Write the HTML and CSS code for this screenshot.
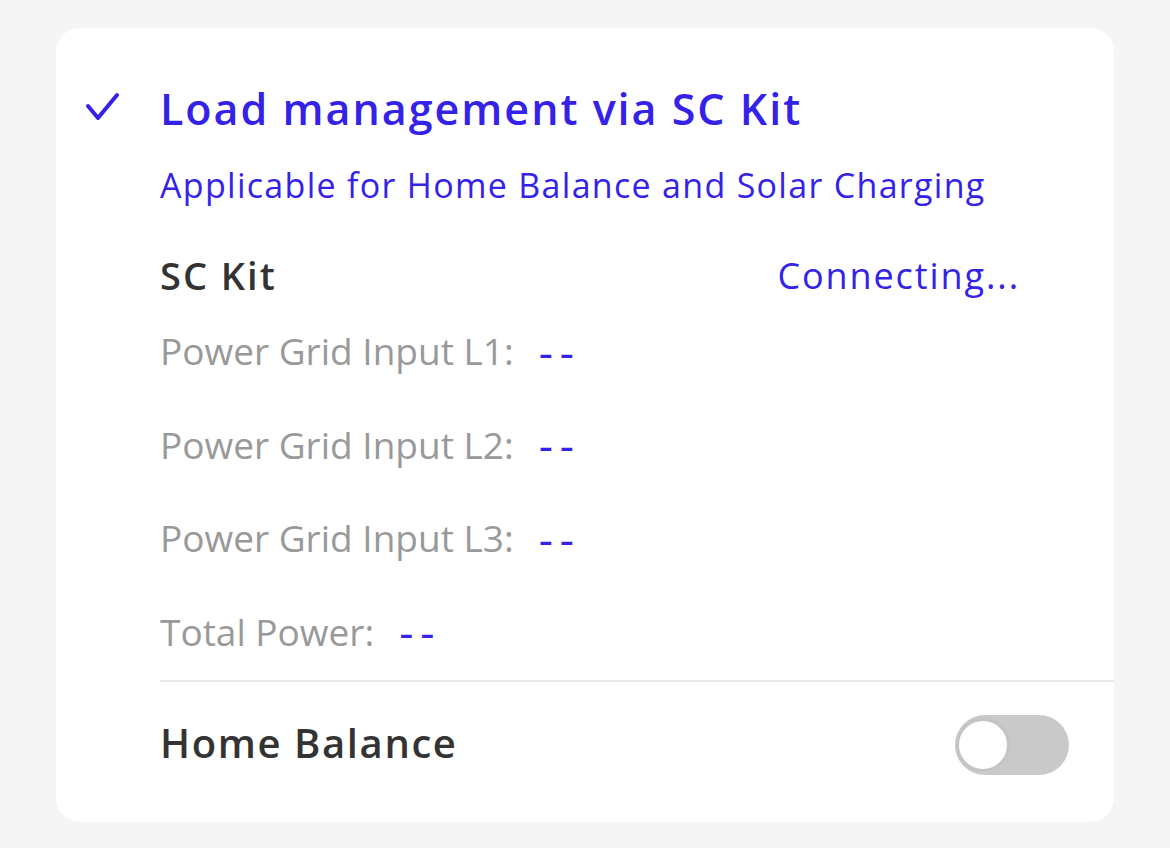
FILE: index.html
```html
<!DOCTYPE html>
<html lang="en">
<head>
    <meta charset="UTF-8">
    <title>Load management</title>
    <link rel="stylesheet" href="styles.css">
</head>
<body>
<div class="card">
    <div class="head">
        <svg class="check" width="40" height="40" viewBox="0 0 40 40">
            <polyline points="2,16 12,28 31,5" fill="none" stroke="#3522e8" stroke-width="4" stroke-linecap="round" stroke-linejoin="round"/>
        </svg>
        <div class="title">Load management via SC Kit</div>
    </div>
    <div class="content">
        <div class="sub">Applicable for Home Balance and Solar Charging</div>
        <div class="kit">
            <span class="kit-name">SC Kit</span>
            <span class="kit-state">Connecting...</span>
        </div>
        <ul class="rows">
            <li><span class="label">Power Grid Input L1:</span><span class="value">--</span></li>
            <li><span class="label">Power Grid Input L2:</span><span class="value">--</span></li>
            <li><span class="label">Power Grid Input L3:</span><span class="value">--</span></li>
            <li><span class="label">Total Power:</span><span class="value">--</span></li>
        </ul>
        <div class="balance">
            <span class="balance-name">Home Balance</span>
            <span class="switch"><span class="knob"></span></span>
        </div>
    </div>
</div>
</body>
</html>
```

FILE: styles.css
```css
*{
    margin: 0;
    padding: 0;
}
body{
    background: #f5f5f5;
    padding: 28px 56px 26px;
    font-family: "Open Sans", "Noto Sans", sans-serif;
}
.card{
    background: #fff;
    border-radius: 24px;
    height: 794px;
    padding: 53px 0 0;
    box-sizing: border-box;
}
.head{
    display: flex;
    align-items: center;
    height: 56px;
}
.check{
    margin-left: 30px;
    margin-right: 34px;
    margin-top: 2px;
}
.title{
    color: #3522e8;
    font-size: 43px;
    font-weight: 600;
    letter-spacing: 2px;
    line-height: 56px;
}
.content{
    margin-left: 104px;
}
.sub{
    margin-top: 26px;
    color: #3522e8;
    font-size: 34px;
    font-weight: 400;
    letter-spacing: 1.3px;
    line-height: 44px;
}
.kit{
    margin-top: 44px;
    display: flex;
    justify-content: space-between;
    align-items: center;
    height: 48px;
    padding-right: 94px;
}
.kit-name{
    color: #333;
    font-size: 38px;
    font-weight: 600;
    letter-spacing: 2px;
}
.kit-state{
    color: #3522e8;
    font-size: 36px;
    letter-spacing: 1.9px;
}
.rows{
    list-style: none;
    margin-top: 7px;
    border-bottom: 2px solid #e8e8e8;
}
.rows li{
    height: 93.5px;
    display: flex;
    align-items: center;
    padding-bottom: 4px;
    box-sizing: border-box;
}
.label{
    color: #999;
    font-size: 37px;
}
.value{
    color: #3522e8;
    font-size: 44px;
    font-weight: 400;
    margin-left: 25px;
    letter-spacing: 7px;
}
.balance{
    height: 120px;
    display: flex;
    justify-content: space-between;
    align-items: center;
    padding-right: 45px;
}
.balance-name{
    color: #333;
    font-size: 40px;
    font-weight: 600;
    letter-spacing: 1.6px;
}
.switch{
    width: 114px;
    height: 60px;
    border-radius: 30px;
    background: #c9c9c9;
    display: flex;
    align-items: center;
    padding-left: 1px;
    box-sizing: border-box;
    margin-top: 6px;
}
.knob{
    width: 48px;
    height: 48px;
    border-radius: 50%;
    background: #fff;
    border: 3px solid #c4c4c4;
}
```
